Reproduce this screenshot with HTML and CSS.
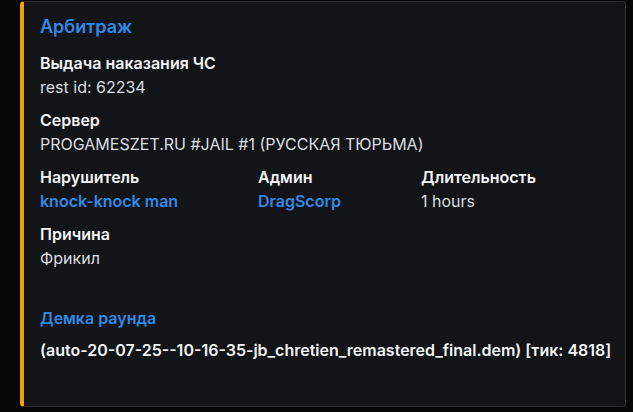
FILE: index.html
```html
<!DOCTYPE html>
<html lang="ru">
<head>
    <meta charset="UTF-8">
    <meta name="viewport" content="width=device-width, initial-scale=1.0">
    <title>Арбитраж</title>
    <link rel="stylesheet" href="styles.css">
</head>
<body>
    <div class="embed">
        <div class="embed-title">Арбитраж</div>

        <div class="field">
            <div class="field-name">Выдача наказания ЧС</div>
            <div class="field-value">rest id: 62234</div>
        </div>

        <div class="field">
            <div class="field-name">Сервер</div>
            <div class="field-value">PROGAMESZET.RU #JAIL #1 (РУССКАЯ ТЮРЬМА)</div>
        </div>

        <div class="field-row">
            <div class="field">
                <div class="field-name">Нарушитель</div>
                <div class="field-value link">knock-knock man</div>
            </div>
            <div class="field">
                <div class="field-name">Админ</div>
                <div class="field-value link">DragScorp</div>
            </div>
            <div class="field">
                <div class="field-name">Длительность</div>
                <div class="field-value">1 hours</div>
            </div>
        </div>

        <div class="field">
            <div class="field-name">Причина</div>
            <div class="field-value">Фрикил</div>
        </div>

        <div class="demo">
            <div class="demo-title">Демка раунда</div>
            <div class="demo-file">(auto-20-07-25--10-16-35-jb_chretien_remastered_final.dem) [тик: 4818]</div>
        </div>
    </div>
</body>
</html>
```

FILE: styles.css
```css
/* Page */
body {
    margin: 0;
    padding: 1px 6px 0 20px;
    background-color: #060606;
    font-family: 'Inter', 'Noto Sans', sans-serif;
    color: #dbdee1;
    overflow: hidden;
}

/* Embed card */
.embed {
    width: 585px;
    height: 389px;
    padding: 15px 0 0 16px;
    background-color: #131417;
    border: 1px solid #2e3035;
    border-left: 4px solid #f0a20c;
    border-radius: 4px;
}

.embed-title {
    font-size: 18px;
    font-weight: 600;
    line-height: 20px;
    color: #3089e8;
    margin-bottom: 16px;
}

/* Fields */
.field {
    margin-bottom: 13px;
}

.field-name {
    font-size: 16px;
    font-weight: 600;
    line-height: 20px;
    color: #f2f3f5;
    margin-bottom: 4px;
}

.field-value {
    font-size: 16px;
    line-height: 20px;
    color: #dbdee1;
}

.field-value.link {
    font-weight: 600;
    color: #3089e8;
}

.field-row {
    display: grid;
    grid-template-columns: 218px 163px 1fr;
}

/* Demo block */
.demo {
    margin-top: 40px;
}

.demo-title {
    font-size: 16px;
    font-weight: 600;
    line-height: 20px;
    color: #3089e8;
    margin-bottom: 12px;
}

.demo-file {
    font-size: 16px;
    font-weight: 600;
    line-height: 20px;
    color: #f2f3f5;
}
```
